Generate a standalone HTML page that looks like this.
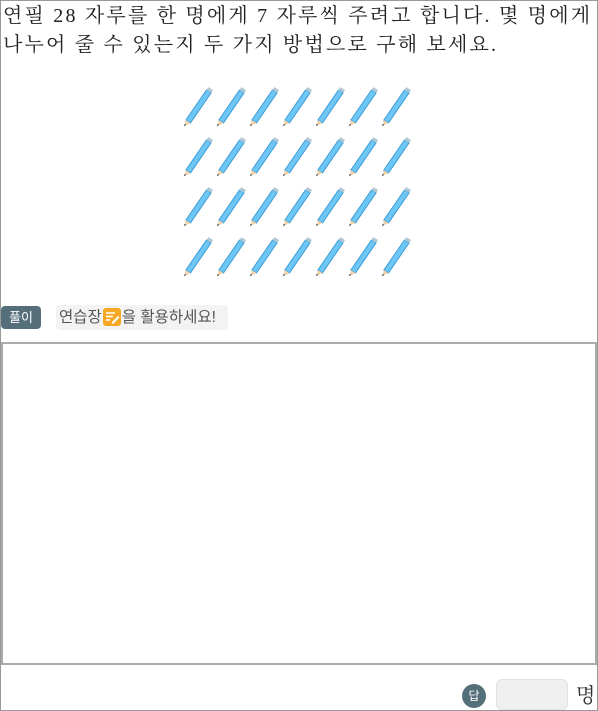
<!DOCTYPE html>
<html><head><meta charset="utf-8"><style>
html,body{margin:0;padding:0;background:#fff;}
body{width:598px;height:711px;position:relative;overflow:hidden;font-family:"Liberation Serif","Noto Serif CJK SC",serif;}
.frame{position:absolute;left:0;top:0;width:596px;height:709px;border:1px solid #999;}
.q{position:absolute;left:3px;top:2px;font-family:"Liberation Serif","Noto Serif CJK SC",serif;font-size:20px;letter-spacing:2.2px;line-height:29px;color:#222;white-space:nowrap;}
.p{position:absolute;width:32px;height:44px;}
.tag{position:absolute;left:1px;top:306px;width:40px;height:23px;background:#546e7a;color:#fff;border-radius:4px;font:13px "Liberation Sans","Noto Sans CJK KR",sans-serif;line-height:23px;text-align:center;}
.hint{position:absolute;left:56px;top:305px;width:172px;height:25px;background:#f3f3f3;border-radius:4px;font:15.5px "Liberation Sans","Noto Sans CJK KR",sans-serif;color:#555;line-height:25px;padding-left:3px;box-sizing:border-box;white-space:nowrap;}
.ic{display:inline-block;width:18px;height:18px;background:#f9a825;border-radius:3px;vertical-align:-4px;position:relative;margin:0 1px;}
.box{position:absolute;left:1px;top:342px;width:592px;height:319px;border:2px solid #aaa;}
.ans{position:absolute;left:462px;top:684px;width:24px;height:24px;border-radius:50%;background:#546e7a;color:#fff;font:12px "Liberation Sans","Noto Sans CJK KR",sans-serif;line-height:24px;text-align:center;}
.inp{position:absolute;left:496px;top:679px;width:70px;height:29px;background:#efefef;border:1px solid #e2e2e2;border-radius:6px;}
.unit{position:absolute;left:576px;top:679px;font-size:20px;color:#333;font-family:"Liberation Serif","Noto Serif CJK SC",serif;}
</style></head><body>
<div class="frame"></div>
<div class="q">연필 28 자루를 한 명에게 7 자루씩 주려고 합니다. 몇 명에게<br>나누어 줄 수 있는지 두 가지 방법으로 구해 보세요.</div>
<svg width="0" height="0" style="position:absolute"><defs><g id="pc">
<path d="M4 38 L26 6 L31 9 L9 41 Z" fill="#6ec6f5" stroke="#3a9ad6" stroke-width="1"/>
<path d="M26 6 L28 3 L33 6 L31 9 Z" fill="#b0c8d4"/>
<path d="M4 38 L9 41 L3 44 Z" fill="#f1d1a8"/>
<path d="M3 42 L4.5 43 L2 44.5 Z" fill="#333"/>
</g></defs></svg>
<div id="g"></div>
<script>
var h='';for(var r=0;r<4;r++)for(var c=0;c<7;c++){h+='<svg class="p" style="left:'+(182+c*33)+'px;top:'+(84+r*50)+'px" viewBox="0 0 34 46"><use href="#pc"/></svg>';}
document.getElementById('g').innerHTML=h;
</script>
<div class="tag">풀이</div>
<div class="hint">연습장<span class="ic"><svg width="18" height="18" viewBox="0 0 18 18"><path d="M3 5h9M3 8.5h7M3 12h4" stroke="#fff" stroke-width="1.6"/><path d="M9 14l6-6 1.5 1.5-6 6H9z" fill="#fff"/></svg></span>을 활용하세요!</div>
<div class="box"></div>
<div class="ans">답</div>
<div class="inp"></div>
<div class="unit">명</div>
</body></html>
